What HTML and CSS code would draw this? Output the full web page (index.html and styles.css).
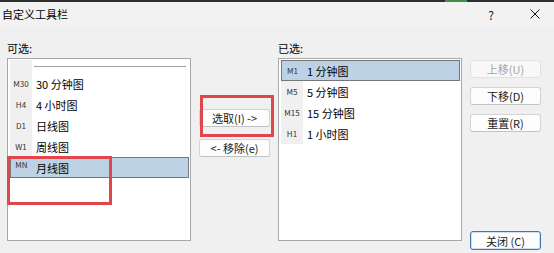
FILE: index.html
```html
<!DOCTYPE html>
<html>
<head>
    <title>自定义工具栏</title>
    <link rel="stylesheet" href="styles.css">
</head>
<body>
    <div class="window">
        <div class="strip"></div>
        <div class="titlebar">
            <span class="title">自定义工具栏</span>
            <span class="help">?</span>
            <span class="close-x">
                <svg width="10" height="10" viewBox="0 0 10 10">
                    <path d="M0.5 0.5 L9.5 9.5 M9.5 0.5 L0.5 9.5" stroke="#1a1a1a" stroke-width="1" fill="none"/>
                </svg>
            </span>
        </div>

        <div class="dialog">
            <div class="column">
                <div class="label">可选:</div>
                <div class="listbox">
                    <div class="row sep-row"><span class="tag"></span><span class="sep"></span></div>
                    <div class="row"><span class="tag">M30</span><span class="name">30 分钟图</span></div>
                    <div class="row"><span class="tag">H4</span><span class="name">4 小时图</span></div>
                    <div class="row"><span class="tag">D1</span><span class="name">日线图</span></div>
                    <div class="row"><span class="tag">W1</span><span class="name">周线图</span></div>
                    <div class="row selected"><span class="tag tag-raised">MN</span><span class="name">月线图</span></div>
                </div>
            </div>

            <div class="middle">
                <button class="btn">选取(I) -&gt;</button>
                <button class="btn">&lt;- 移除(e)</button>
            </div>

            <div class="column right-column">
                <div class="label">已选:</div>
                <div class="listbox">
                    <div class="row selected"><span class="tag">M1</span><span class="name">1 分钟图</span></div>
                    <div class="row"><span class="tag">M5</span><span class="name">5 分钟图</span></div>
                    <div class="row"><span class="tag">M15</span><span class="name">15 分钟图</span></div>
                    <div class="row"><span class="tag">H1</span><span class="name">1 小时图</span></div>
                </div>
            </div>

            <div class="actions">
                <button class="btn" disabled>上移(U)</button>
                <button class="btn">下移(D)</button>
                <button class="btn">重置(R)</button>
                <button class="btn default">关闭 (C)</button>
            </div>
        </div>

        <!-- red highlight boxes drawn over the dialog -->
        <div class="mark mark-left"></div>
        <div class="mark mark-mid"></div>
    </div>
</body>
</html>
```

FILE: styles.css
```css
body {
    margin: 0;
    background-color: #f0f0f0;
    font-family: "Noto Sans CJK SC", "Noto Sans", sans-serif;
    color: #1a1a1a;
}

.window {
    position: relative;
    width: 554px;
    height: 253px;
    overflow: hidden;
    background-color: #f0f0f0;
}

.strip {
    height: 2px;
    background: linear-gradient(to right, #2e2e2e 0, #2e2e2e 445px, #3f8f4a 445px, #3f8f4a 467px, #2e2e2e 467px);
}

.titlebar {
    display: flex;
    align-items: center;
    height: 24px;
    padding-left: 2px;
    background-color: #f2f2f2;
    font-size: 11px;
}

.title {
    flex: 1;
    color: #000;
}

.help {
    font-size: 12px;
    margin-right: 36px;
}

.close-x {
    display: flex;
    margin-right: 14px;
}

.dialog {
    display: flex;
    padding: 14px 0 0 7px;
    height: 213px;
}

.column {
    display: flex;
    flex-direction: column;
    width: 184px;
}

.right-column {
    margin-left: 7px;
}

.label {
    font-size: 11px;
    line-height: 16px;
    margin-bottom: 2px;
    color: #000;
}

.listbox {
    box-sizing: border-box;
    height: 183px;
    padding: 1px 1px 0 2px;
    background-color: #fff;
    border: 1px solid #a8a8a8;
}

.row {
    display: flex;
    align-items: center;
    box-sizing: border-box;
    height: 21px;
    font-size: 11px;
    color: #000;
}

.sep-row {
    height: 13px;
}

.tag {
    display: flex;
    align-items: center;
    justify-content: center;
    align-self: stretch;
    width: 22px;
    flex-shrink: 0;
    background-color: #f0f0f0;
    font-size: 8px;
    color: #333;
}

.tag-raised {
    padding-bottom: 6px;
    box-sizing: border-box;
}

.name {
    padding-left: 4px;
}

.sep {
    flex: 1;
    height: 1px;
    margin: 0 3px 0 2px;
    background-color: #a0a0a0;
}

.selected {
    background-color: #bdd3e5;
    border: 1px solid #767676;
}

.selected .tag {
    background-color: transparent;
    width: 21px;
}

.middle {
    display: flex;
    flex-direction: column;
    gap: 12px;
    width: 72px;
    margin-left: 8px;
    padding-top: 69px;
}

.actions {
    display: flex;
    flex-direction: column;
    gap: 9px;
    width: 71px;
    margin-left: 8px;
    padding-top: 20px;
}

.btn {
    box-sizing: border-box;
    width: 71px;
    height: 18px;
    padding: 0;
    font-family: "Noto Sans CJK SC", "Noto Sans", sans-serif;
    font-size: 11px;
    line-height: 14px;
    color: #1a1a1a;
    background-color: #fdfdfd;
    border: 1px solid #d3d3d3;
    border-bottom-color: #c2c2c2;
    border-radius: 3px;
}

.btn:disabled {
    color: #a6a6a6;
    background-color: #f8f8f8;
    border-color: #e2e2e2;
}

.default {
    height: 19px;
    margin-top: auto;
    margin-bottom: 3px;
    border-color: #3a76b4;
    box-shadow: inset 0 0 0 1px #cfe0f2;
}

/* red annotation boxes */
.mark {
    position: absolute;
    box-sizing: border-box;
    border: 3px solid #e0474b;
}

.mark-left {
    left: 7px;
    top: 156px;
    width: 105px;
    height: 49px;
}

.mark-mid {
    left: 200px;
    top: 95px;
    width: 74px;
    height: 42px;
}
```
